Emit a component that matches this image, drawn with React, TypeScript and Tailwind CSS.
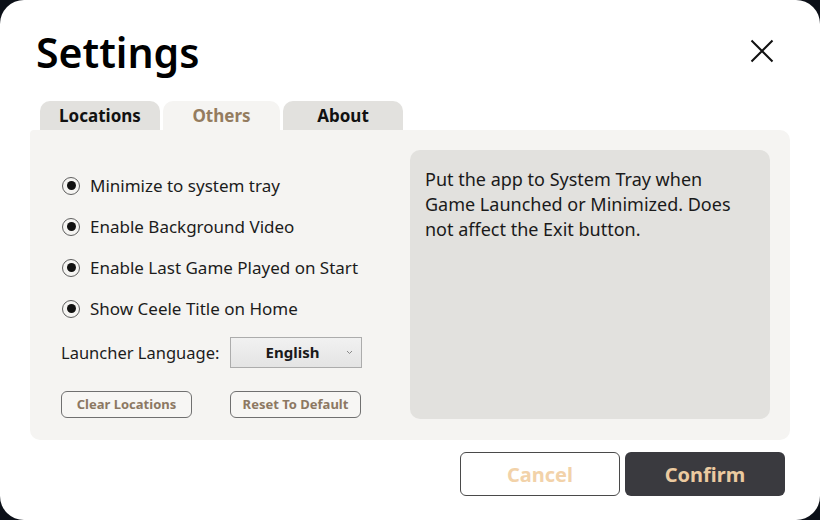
const font = { fontFamily: '"Noto Sans", "Open Sans", sans-serif' };

const options = [
  "Minimize to system tray",
  "Enable Background Video",
  "Enable Last Game Played on Start",
  "Show Ceele Title on Home",
];

const tabs = ["Locations", "Others", "About"];

const Radio = ({ label }: { label: string }) => (
  <div className="flex h-[41px] items-center gap-[10px]">
    <span className="flex h-[18px] w-[18px] items-center justify-center rounded-full border-[1.5px] border-[#5f5f5f]">
      <span className="h-[9px] w-[9px] rounded-full bg-[#111]" />
    </span>
    <span className="text-[17px] text-[#1c1c1c]">{label}</span>
  </div>
);

export default function App() {
  return (
    <div className="h-[520px] w-[820px] bg-[#0c1018]" style={font}>
      <div className="flex h-full w-full flex-col rounded-[24px] bg-white">
        <div className="flex items-start justify-between pl-[36px] pr-[46px] pt-[30px]">
          <h1 className="text-[41px] font-semibold leading-[44px] text-black">Settings</h1>
          <svg width="24" height="24" viewBox="0 0 24 24" className="mt-[9px]">
            <path d="M1.5 1.5 L22.5 22.5 M22.5 1.5 L1.5 22.5" stroke="#111" strokeWidth="2" fill="none" />
          </svg>
        </div>

        <div className="ml-[40px] mt-[27px] flex gap-[3px]">
          {tabs.map((t) => (
            <div
              key={t}
              className={
                t === "Others"
                  ? "flex h-[29px] w-[117px] items-center justify-center rounded-t-[10px] bg-[#f5f4f2] pt-[1px] text-[17px] font-bold text-[#947c5f]"
                  : "flex h-[29px] w-[120px] items-center justify-center rounded-t-[10px] bg-[#e2e1de] pt-[1px] text-[17px] font-bold text-[#111]"
              }
            >
              {t}
            </div>
          ))}
        </div>

        <div className="mx-[30px] flex h-[310px] rounded-b-[10px] rounded-tr-[10px] rounded-tl-[4px] bg-[#f5f4f2]">
          <div className="flex w-[380px] flex-col pl-[31px] pt-[35px]">
            <div className="flex flex-col pl-[1px]">
              {options.map((o) => (
                <Radio key={o} label={o} />
              ))}
            </div>
            <div className="mt-[8px] flex items-center">
              <span className="w-[169px] shrink-0 whitespace-nowrap pt-[1px] text-[16.5px] text-[#1c1c1c]">Launcher Language:</span>
              <div className="flex h-[31px] w-[132px] items-center border border-[#acacac] bg-gradient-to-b from-[#f1f1f1] to-[#e4e4e4] pr-[8px]">
                <span className="flex-1 pl-[8px] text-center text-[15px] font-bold text-[#1a1a1a]">English</span>
                <svg width="7" height="5" viewBox="0 0 7 5">
                  <path d="M1 1 L3.5 3.5 L6 1" stroke="#888" strokeWidth="1" fill="none" />
                </svg>
              </div>
            </div>
            <div className="mt-[23px] flex gap-[38px]">
              <button className="h-[27px] w-[131px] rounded-[6px] border-[1.5px] border-[#707070] bg-[#f7f6f4] text-[13px] font-bold text-[#8c7862]">
                Clear Locations
              </button>
              <button className="h-[27px] w-[131px] rounded-[6px] border-[1.5px] border-[#707070] bg-[#f7f6f4] text-[13px] font-bold text-[#8c7862]">
                Reset To Default
              </button>
            </div>
          </div>
          <div className="mb-[21px] ml-auto mr-[20px] mt-[20px] w-[360px] rounded-[10px] bg-[#e2e1de] pl-[15px] pr-[16px] pt-[17px] text-[18px] leading-[25px] text-[#1a1a1a]">
            Put the app to System Tray when Game Launched or Minimized. Does not affect the Exit button.
          </div>
        </div>

        <div className="mt-[12px] flex justify-end gap-[5px] pr-[35px]">
          <button className="h-[44px] w-[160px] rounded-[6px] border border-[#4a4a4a] bg-white pt-[2px] text-[20px] font-bold text-[#f2d2a9]">
            Cancel
          </button>
          <button className="h-[44px] w-[160px] rounded-[6px] bg-[#3a3a3f] pt-[2px] text-[20px] font-bold text-[#ebcaa0]">
            Confirm
          </button>
        </div>
      </div>
    </div>
  );
}
